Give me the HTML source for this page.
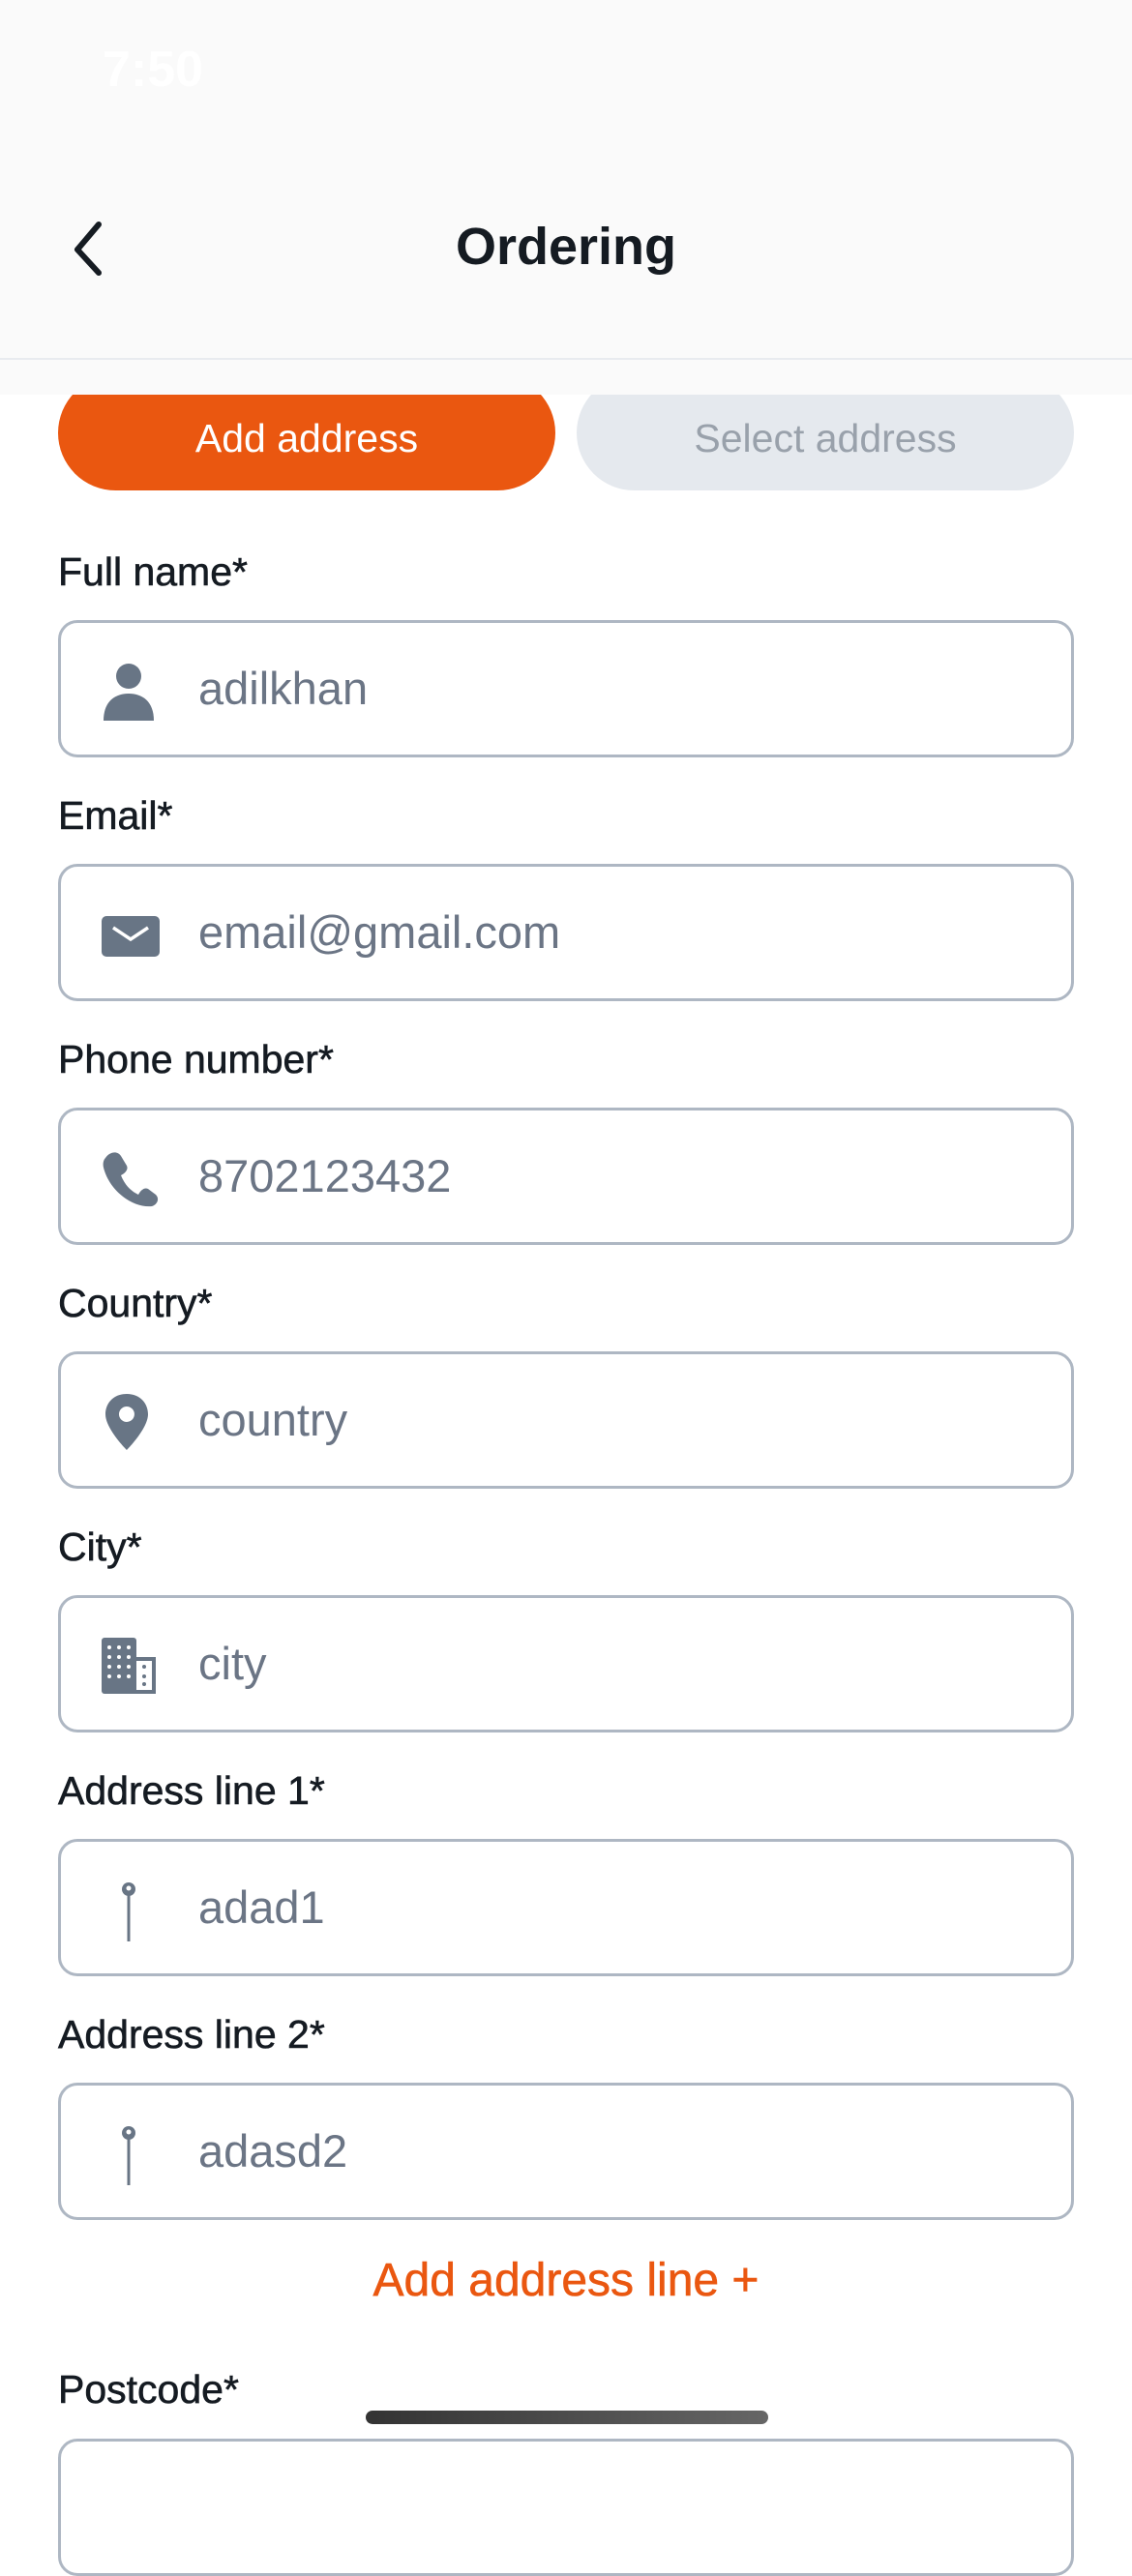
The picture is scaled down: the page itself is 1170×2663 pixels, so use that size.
<!DOCTYPE html>
<html><head><meta charset="utf-8"><style>
*{margin:0;padding:0;box-sizing:border-box}
body{width:1170px;height:2532px;background:#fff;position:relative;overflow:hidden;font-family:"Liberation Sans",sans-serif}
.hdr{position:absolute;left:0;top:0;width:1170px;height:408px;background:#fafafa;z-index:2}
.hdr .line{position:absolute;left:0;top:370px;width:1170px;height:2px;background:#e8ebef}
.title{position:absolute;left:0;width:1170px;top:224px;text-align:center;font-size:54px;font-weight:bold;color:#151b22}
.btn{position:absolute;top:388px;height:119px;border-radius:60px;font-size:41px;text-align:center;line-height:130px}
.lbl{position:absolute;left:60px;font-size:41px;color:#151b22;-webkit-text-stroke:0.6px #151b22}
.inp{position:absolute;left:60px;width:1050px;height:142px;border:3px solid #aeb7c3;border-radius:20px}
.inp span{position:absolute;left:142px;top:0;line-height:136px;font-size:47px;color:#6b7585}
.inp svg{position:absolute;left:40px;top:39px}
</style></head><body>
<div class="hdr">
<div style="position:absolute;left:106px;top:42px;font-size:52px;color:#fff;font-weight:bold">7:50</div>
<svg style="position:absolute;left:70px;top:226px" width="40" height="60" viewBox="0 0 40 60"><path d="M32 6 L10 32 L32 56" fill="none" stroke="#151b22" stroke-width="6" stroke-linecap="round" stroke-linejoin="round"/></svg>
<div class="title">Ordering</div>
<div class="line"></div>
</div>
<div class="btn" style="left:60px;width:514px;background:#ea5710;color:#fff">Add address</div>
<div class="btn" style="left:596px;width:514px;background:#e5e9ee;color:#99a1ab">Select address</div>

<div class="lbl" style="top:568px">Full name*</div>
<div class="inp" style="top:641px"><svg width="60" height="64" viewBox="0 0 60 64"><circle cx="30" cy="16" r="13" fill="#687585"/><path d="M4 62 C4 42 16 34 30 34 C44 34 56 42 56 62Z" fill="#687585"/></svg><span>adilkhan</span></div>

<div class="lbl" style="top:820px">Email*</div>
<div class="inp" style="top:893px"><svg width="64" height="64" viewBox="0 0 64 64"><rect x="2" y="12" width="60" height="42" rx="5" fill="#687585"/><path d="M14 24 L32 36 L50 24" fill="none" stroke="#fff" stroke-width="3.5"/></svg><span>email@gmail.com</span></div>

<div class="lbl" style="top:1072px">Phone number*</div>
<div class="inp" style="top:1145px"><svg width="64" height="64" viewBox="0 0 64 64"><path d="M6 10 C10 4 18 2 22 8 L28 18 C30 22 26 26 22 28 C26 38 32 44 40 48 C42 44 46 40 50 42 L58 48 C62 52 60 58 54 60 C34 62 10 44 4 20 C3 16 4 12 6 10Z" fill="#687585"/></svg><span>8702123432</span></div>

<div class="lbl" style="top:1324px">Country*</div>
<div class="inp" style="top:1397px"><svg width="60" height="64" viewBox="0 0 60 64"><path d="M28 2 C14 2 6 12 6 23 C6 38 28 60 28 60 C28 60 50 38 50 23 C50 12 42 2 28 2Z M28 15 A8 8 0 1 1 27.9 15Z" fill="#687585" fill-rule="evenodd"/></svg><span>country</span></div>

<div class="lbl" style="top:1576px">City*</div>
<div class="inp" style="top:1649px"><svg width="64" height="64" viewBox="0 0 64 64"><rect x="2" y="2" width="36" height="58" rx="3" fill="#687585"/><rect x="34" y="22" width="24" height="38" fill="#687585"/><rect x="38" y="26" width="16" height="30" fill="#fff"/><g fill="#fff"><circle cx="10" cy="12" r="2"/><circle cx="20" cy="12" r="2"/><circle cx="30" cy="12" r="2"/><circle cx="10" cy="22" r="2"/><circle cx="20" cy="22" r="2"/><circle cx="30" cy="22" r="2"/><circle cx="10" cy="32" r="2"/><circle cx="20" cy="32" r="2"/><circle cx="30" cy="32" r="2"/><circle cx="10" cy="42" r="2"/><circle cx="20" cy="42" r="2"/><circle cx="30" cy="42" r="2"/></g><g fill="#687585"><circle cx="46" cy="32" r="2"/><circle cx="46" cy="42" r="2"/><circle cx="46" cy="50" r="2"/></g></svg><span>city</span></div>

<div class="lbl" style="top:1828px">Address line 1*</div>
<div class="inp" style="top:1901px"><svg width="60" height="64" viewBox="0 0 60 64"><circle cx="30" cy="10" r="7" fill="#687585"/><circle cx="30" cy="9" r="2.5" fill="#fff"/><rect x="28.5" y="14" width="3" height="50" fill="#687585"/></svg><span>adad1</span></div>

<div class="lbl" style="top:2080px">Address line 2*</div>
<div class="inp" style="top:2153px"><svg width="60" height="64" viewBox="0 0 60 64"><circle cx="30" cy="10" r="7" fill="#687585"/><circle cx="30" cy="9" r="2.5" fill="#fff"/><rect x="28.5" y="14" width="3" height="50" fill="#687585"/></svg><span>adasd2</span></div>

<div style="position:absolute;left:0;width:1170px;top:2330px;text-align:center;font-size:48px;color:#ea5710;-webkit-text-stroke:0.6px #ea5710">Add address line +</div>

<div class="lbl" style="top:2447px">Postcode*</div>
<div class="inp" style="top:2521px"></div>
<div style="position:absolute;left:378px;top:2492px;width:416px;height:14px;border-radius:7px;background:linear-gradient(90deg,#333,#666)"></div>
</body></html>
